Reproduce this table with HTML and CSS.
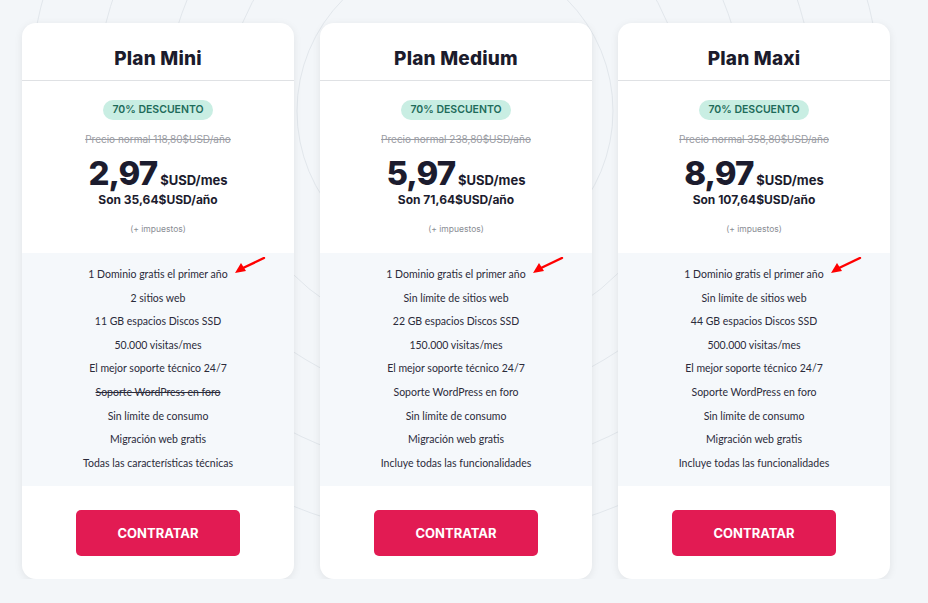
FILE: index.html
```html
<!DOCTYPE html>
<html lang="es">
<head>
    <meta charset="UTF-8">
    <meta name="viewport" content="width=device-width, initial-scale=1.0">
    <title>Planes de Hosting</title>
    <link rel="stylesheet" href="styles.css">
</head>
<body>
    <!-- circulos decorativos del fondo -->
    <svg class="bg-circles" width="928" height="603" viewBox="0 0 928 603" aria-hidden="true">
        <circle cx="455" cy="111" r="158" />
        <circle cx="455" cy="111" r="230" />
        <circle cx="455" cy="111" r="290" />
        <circle cx="455" cy="111" r="360" />
        <circle cx="455" cy="111" r="427" />
    </svg>

    <div class="plans">
        <div class="plan">
            <div class="plan-header">
                <h2>Plan Mini</h2>
            </div>
            <div class="plan-price">
                <span class="badge">70% DESCUENTO</span>
                <p class="old-price">Precio normal 118,80$USD/año</p>
                <p class="price"><span class="amount">2,97</span><span class="unit">$USD/mes</span></p>
                <p class="yearly">Son 35,64$USD/año</p>
                <p class="taxes">(+ impuestos)</p>
            </div>
            <ul class="features">
                <li>1 Dominio gratis el primer año</li>
                <li>2 sitios web</li>
                <li>11 GB espacios Discos SSD</li>
                <li>50.000 visitas/mes</li>
                <li>El mejor soporte técnico 24/7</li>
                <li class="off">Soporte WordPress en foro</li>
                <li>Sin límite de consumo</li>
                <li>Migración web gratis</li>
                <li>Todas las características técnicas</li>
                <svg class="arrow" width="32" height="18" viewBox="0 0 32 18"><path d="M30 1 L9 11" stroke="#f00" stroke-width="2.4" stroke-linecap="round"/><path d="M1 16 L7 6 L12 14 Z" fill="#f00"/></svg>
            </ul>
            <div class="plan-footer">
                <button class="button">CONTRATAR</button>
            </div>
        </div>

        <div class="plan">
            <div class="plan-header">
                <h2>Plan Medium</h2>
            </div>
            <div class="plan-price">
                <span class="badge">70% DESCUENTO</span>
                <p class="old-price">Precio normal 238,80$USD/año</p>
                <p class="price"><span class="amount">5,97</span><span class="unit">$USD/mes</span></p>
                <p class="yearly">Son 71,64$USD/año</p>
                <p class="taxes">(+ impuestos)</p>
            </div>
            <ul class="features">
                <li>1 Dominio gratis el primer año</li>
                <li>Sin límite de sitios web</li>
                <li>22 GB espacios Discos SSD</li>
                <li>150.000 visitas/mes</li>
                <li>El mejor soporte técnico 24/7</li>
                <li>Soporte WordPress en foro</li>
                <li>Sin límite de consumo</li>
                <li>Migración web gratis</li>
                <li>Incluye todas las funcionalidades</li>
                <svg class="arrow" width="32" height="18" viewBox="0 0 32 18"><path d="M30 1 L9 11" stroke="#f00" stroke-width="2.4" stroke-linecap="round"/><path d="M1 16 L7 6 L12 14 Z" fill="#f00"/></svg>
            </ul>
            <div class="plan-footer">
                <button class="button">CONTRATAR</button>
            </div>
        </div>

        <div class="plan">
            <div class="plan-header">
                <h2>Plan Maxi</h2>
            </div>
            <div class="plan-price">
                <span class="badge">70% DESCUENTO</span>
                <p class="old-price">Precio normal 358,80$USD/año</p>
                <p class="price"><span class="amount">8,97</span><span class="unit">$USD/mes</span></p>
                <p class="yearly">Son 107,64$USD/año</p>
                <p class="taxes">(+ impuestos)</p>
            </div>
            <ul class="features">
                <li>1 Dominio gratis el primer año</li>
                <li>Sin límite de sitios web</li>
                <li>44 GB espacios Discos SSD</li>
                <li>500.000 visitas/mes</li>
                <li>El mejor soporte técnico 24/7</li>
                <li>Soporte WordPress en foro</li>
                <li>Sin límite de consumo</li>
                <li>Migración web gratis</li>
                <li>Incluye todas las funcionalidades</li>
                <svg class="arrow" width="32" height="18" viewBox="0 0 32 18"><path d="M30 1 L9 11" stroke="#f00" stroke-width="2.4" stroke-linecap="round"/><path d="M1 16 L7 6 L12 14 Z" fill="#f00"/></svg>
            </ul>
            <div class="plan-footer">
                <button class="button">CONTRATAR</button>
            </div>
        </div>
    </div>
</body>
</html>
```

FILE: styles.css
```css
body {
    font-family: 'Inter', 'Liberation Sans', sans-serif;
    background: #f3f6f9;
    margin: 0;
    padding: 0;
    overflow: hidden;
    color: #1c1c2e;
}
.bg-circles {
    position: absolute;
    top: 0;
    left: 0;
    z-index: 0;
}
.bg-circles circle {
    fill: none;
    stroke: #e2e7ec;
    stroke-width: 1;
}
.plans {
    position: relative;
    z-index: 1;
    display: flex;
    gap: 26px;
    padding: 23px 0 0 22px;
}
.plan {
    width: 272px;
    background: #fff;
    border-radius: 14px;
    box-shadow: 0 2px 8px rgba(0, 0, 0, 0.08);
    overflow: hidden;
    text-align: center;
}
.plan-header {
    padding: 24px 0 9px;
    border-bottom: 1px solid #dfe1e4;
}
.plan-header h2 {
    margin: 0;
    font-size: 19px;
    line-height: 24px;
    font-weight: 800;
    letter-spacing: 0.2px;
    color: #1b1b2c;
}
.plan-price {
    display: flex;
    flex-direction: column;
    align-items: center;
    padding: 19px 0 18px;
}
.plan-price p {
    margin: 0;
}
.badge {
    height: 20px;
    line-height: 20px;
    padding: 0 9px;
    border-radius: 10px;
    background: #c9eee3;
    color: #1e6b5a;
    font-size: 10.5px;
    font-weight: 600;
}
.plan-price .old-price {
    margin-top: 11px;
    font-size: 10px;
    line-height: 16px;
    color: #9a9ca3;
    text-decoration: line-through;
}
.plan-price .price {
    margin-top: 8px;
    height: 36px;
    font-size: 33px;
    line-height: 36px;
}
.amount {
    font-weight: 800;
    letter-spacing: -1px;
}
.unit {
    font-size: 13px;
    line-height: 16px;
    font-weight: 700;
    margin-left: 3px;
}
.plan-price .yearly {
    margin-top: 1px;
    font-size: 12px;
    line-height: 16px;
    font-weight: 700;
}
.plan-price .taxes {
    margin-top: 15px;
    font-size: 8.5px;
    line-height: 12px;
    color: #8a8d94;
}
.features {
    position: relative;
    list-style: none;
    margin: 0;
    padding: 10px 0 11px;
    background: #f5f8fb;
    font-family: 'Lato', 'Liberation Sans', sans-serif;
    font-size: 10.5px;
    color: #2b2b3a;
}
.features li {
    line-height: 23.6px;
}
.features li.off {
    text-decoration: line-through;
}
.arrow {
    position: absolute;
    top: 4px;
    left: 212px;
}
.plan-footer {
    padding: 24px 0 23px;
}
.button {
    width: 164px;
    height: 46px;
    background-color: #e21b53;
    border: none;
    border-radius: 5px;
    color: white;
    font-family: 'Inter', 'Liberation Sans', sans-serif;
    font-size: 13px;
    font-weight: 700;
    cursor: pointer;
}
```
